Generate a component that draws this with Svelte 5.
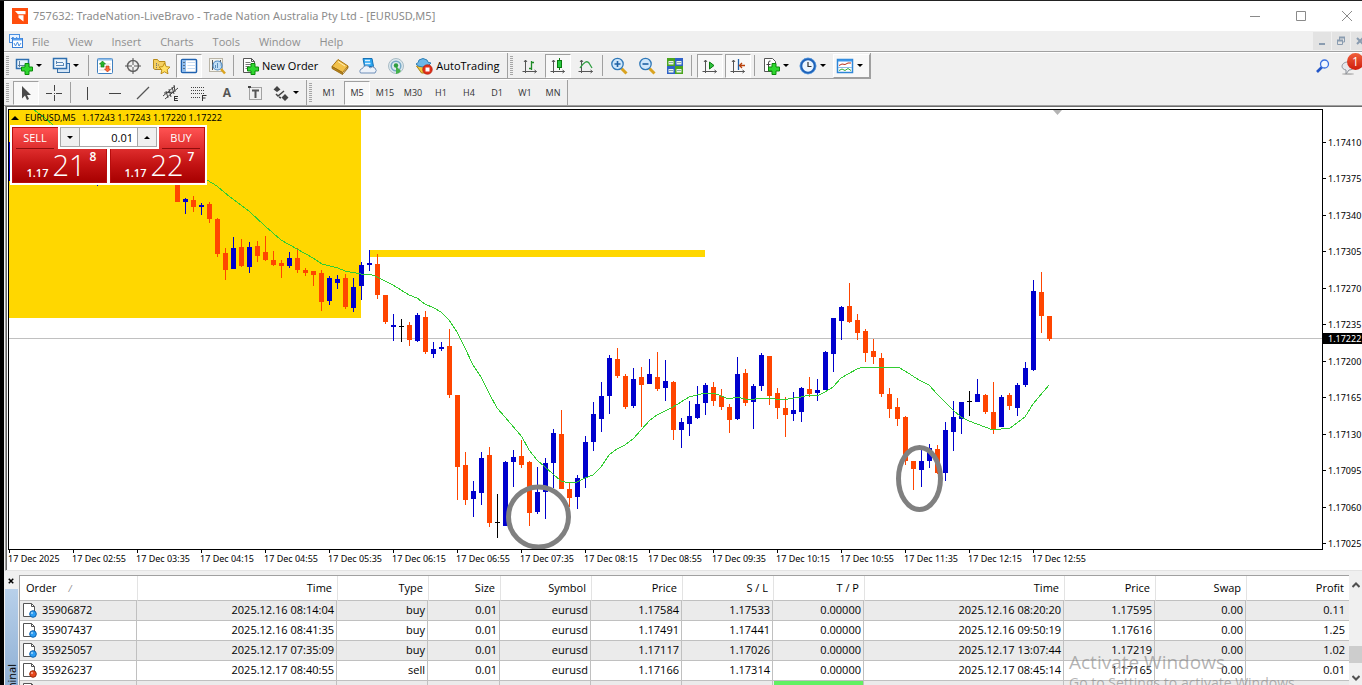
<script>
  const menus = ['File', 'View', 'Insert', 'Charts', 'Tools', 'Window', 'Help'];

  const plus = '<path d="M8.500 7.500h4v3.500h3.500v4h-3.500v3.500h-4v-3.500h-3.500v-4h3.500z" transform="translate(1.500 -1)" fill="#2fd62f" stroke="#0b8a0b"/>';
  const axes = '<path d="M4.500 3v13M1.500 14.500h14M3 5l1.500-2 1.500 2M13.500 13l2 1.500-2 1.500" fill="none" stroke="#555"/>';

  const icons = {
    newChart: '<rect x="1.500" y="2.500" width="12" height="9" fill="#e8f3fd" stroke="#2f6fb0" stroke-width="1.500"/><path d="M4.500 4v6M3 8.500h8" stroke="#5c7f9f" fill="none"/>' + plus,
    profiles: '<rect x="5.500" y="6.500" width="12" height="9" fill="#d5e6f7" stroke="#3a6fa5"/><rect x="1.500" y="1.500" width="13" height="10" fill="#eef6fd" stroke="#2f6fb0" stroke-width="1.500"/><path d="M4.500 4v3M4 5.500h7M11.500 6v3M4 8.500h7.500" stroke="#5c88b5" fill="none"/>',
    market: '<rect x="1.500" y="1.500" width="15" height="15" rx="1" fill="#fff" stroke="#3f7fbf"/><path d="M2 2.500h14" stroke="#8fbce8" stroke-width="2"/><path d="M3 7h12M3 10h12M3 13h12" stroke="#ddd"/><path d="M6.500 4l3 3h-1.500v3h-3v-3h-1.500z" fill="#27b52b" stroke="#0b7a10" stroke-width=".6"/><path d="M11.500 15l-3-3h1.500v-3h3v3h1.500z" fill="#ff6a3a" stroke="#b8300b" stroke-width=".6"/>',
    target: '<circle cx="9" cy="9" r="5.500" fill="none" stroke="#666" stroke-width="1.500"/><path d="M9 1v7M9 10v7M1 9h7M10 9h7" stroke="#555"/>',
    favourites: '<path d="M1.500 2.500h4l1.500 2h6v8h-10l-1.500-1z" fill="#f5d060" stroke="#b88b1a"/><path d="M4 8h4M4.500 6v8" stroke="#777" stroke-dasharray="1 1"/><path d="M12.500 6l1.700 3.600 3.800.5-2.800 2.700.8 4-3.500-2-3.500 2 .8-4L7 10.100l3.800-.5z" fill="#ffe066" stroke="#b8860b" stroke-width=".9"/>',
    navigator: '<rect x="1.500" y="2.500" width="15" height="13" rx="1" fill="#fff" stroke="#1f62b0" stroke-width="1.500"/><rect x="2" y="3" width="4" height="12" fill="#8fbcec"/><path d="M3.500 5.500h1M3.500 8.500h1M3.500 11.500h1" stroke="#222"/><path d="M7.500 5.500h8M7.500 8.500h8M7.500 11.500h8" stroke="#c6dcf3"/>',
    tester: '<rect x="1.500" y="1.500" width="13" height="13" fill="#f4f4ee" stroke="#b9b4a6"/><path d="M4.500 3v10M12.500 3v6" stroke="#555"/><circle cx="9.500" cy="8.500" r="4.500" fill="#b9dcf7" fill-opacity=".85" stroke="#4c88c2" stroke-width="1.200"/><path d="M9.500 6v5M7.500 8v3" stroke="#5b8db8"/><path d="M13 12l4 4.500" stroke="#d9a320" stroke-width="2.500"/>',
    order: '<path d="M2.500 1.500h8l3 3v11h-11z" fill="#fff" stroke="#555"/><path d="M10.500 1.500v3h3" fill="none" stroke="#555"/><path d="M4.500 5.500h5M4.500 7.500h7M4.500 9.500h4M4.500 11.500h3" stroke="#777"/>' + plus,
    editor: '<path d="M1 9.500l6-7 10 6.500-5.500 6.500z" fill="#f2c14a" stroke="#a87412"/><path d="M1 9.500v2l10.500 6v-2zM11.500 17.500l5.500-6.500v-2" fill="#b98518" stroke="#94660d" stroke-width=".8"/><path d="M7 4.500l7 4.500" stroke="#fff0b8"/>',
    vps: '<path d="M4 1.500h9l1.500 8h-9z" fill="#2aa5f0" stroke="#1570b5"/><path d="M6 3.500h5M6 6.500h5.500" stroke="#dff2ff" stroke-width="1.500"/><path d="M1.500 16a2.800 2.800 0 0 1 2-4.500 4 4 0 0 1 7.500-.5 3 3 0 0 1 5 5z" fill="#edf2f9" stroke="#6f8fb8"/>',
    signals: '<circle cx="9" cy="9" r="7.500" fill="#dde9ee" stroke="#a9bcc6"/><circle cx="9" cy="9" r="4.800" fill="none" stroke="#78a9c7" stroke-width="1.500"/><path d="M9 9v8a8 8 0 0 0 5-3z" fill="#45b24a"/><circle cx="9" cy="8.500" r="2.200" fill="#2f9e41"/>',
    auto: '<path d="M1.500 9h14l-4 7h-5z" fill="#f0c63a" stroke="#a8801a"/><path d="M1 7q3-1 3-4 4-3 8 0 0 3 4 3-2 4-8 4-5 0-7-3z" fill="#6bb7e8" stroke="#2f7fb5"/><circle cx="12.500" cy="12.500" r="4.800" fill="#e0301a" stroke="#a81505" stroke-width=".6"/><rect x="10.500" y="10.500" width="4" height="4" fill="#fff"/>',
    bars: axes + '<path d="M10.500 4v9M8 11.500h2.500M10.500 5.500h2.500" stroke="#1d8a25" stroke-width="1.300" fill="none"/>',
    candles: axes + '<path d="M10.500 1v12" stroke="#0b7a10"/><rect x="8.500" y="3.500" width="4" height="7" fill="#27c93f" stroke="#0b7a10"/>',
    line: axes + '<path d="M3 11q6-9 9-5l3 5" stroke="#2f9e41" stroke-width="1.300" fill="none"/>',
    zoomIn: '<path d="M11.500 11.500l5 5" stroke="#d9a320" stroke-width="3"/><circle cx="7.500" cy="7" r="5.700" fill="#cfe7fb" stroke="#2f78b8" stroke-width="1.300"/><path d="M4.500 7h6M7.500 4v6" stroke="#1f62a5" stroke-width="1.600"/>',
    zoomOut: '<path d="M11.500 11.500l5 5" stroke="#d9a320" stroke-width="3"/><circle cx="7.500" cy="7" r="5.700" fill="#cfe7fb" stroke="#2f78b8" stroke-width="1.300"/><path d="M4.500 7h6" stroke="#1f62a5" stroke-width="1.600"/>',
    tile: '<path d="M1 1h8v8H1zM9 9h8v8H9z" fill="#4aa51f"/><path d="M9 1h8v8H9zM1 9h8v8H1z" fill="#2f62c8"/><path d="M2.500 4h5v3.500h-5zM10.500 4h5v3.500h-5zM2.500 12h5v3.500h-5zM10.500 12h5v3.500h-5z" fill="#eef5e8"/><path d="M3 5.500h4M11 5.500h4M3 13.500h4M11 13.500h4" stroke="#8aa"/>',
    scroll: axes + '<path d="M8.500 5v7l4.500-3.500z" fill="#2fc43f" stroke="#0b7a10"/>',
    shift: axes + '<path d="M9.500 2v11" stroke="#2060a8" stroke-width="1.300"/><path d="M16 8.500h-5M13 6l-2.500 2.500L13 11" stroke="#b8400b" stroke-width="1.300" fill="none"/>',
    indicators: '<path d="M2.500 1.500h8l3 3v10h-11z" fill="#fff" stroke="#555"/><path d="M8.500 4q-2-.5-2 2v6M4.500 7.500h4" stroke="#444" fill="none"/>' + plus,
    clock: '<circle cx="9" cy="9" r="7" fill="#eaf5ff" stroke="#1e62b8" stroke-width="2.600"/><circle cx="9" cy="9" r="8" fill="none" stroke="#6fb0f0" stroke-width=".6"/><path d="M9 5v4.500h3.500" stroke="#333" fill="none" stroke-width="1.200"/>',
    templates: '<rect x="1.500" y="2.500" width="15" height="13" fill="#fff" stroke="#2f86d8" stroke-width="1.500"/><path d="M2 3.500h14" stroke="#3b97ea" stroke-width="2"/><path d="M2 10.500h14" stroke="#8fbce8"/><path d="M3 8.500l3-1.500 3 .5 3-1.500h3" stroke="#b8301a" fill="none"/><path d="M3 13.500l3-1.500 3 1.500 3-2 3 2" stroke="#2fae3a" fill="none"/>',
    cursor: '<path d="M5 2v12.500l3-3 2 4.500 2-1-2-4h4z" fill="#4a4a4a"/>',
    cross: '<path d="M9.500 1v6M9.500 11v6M1 9.500h6M11 9.500h6M9 9.500h1" stroke="#444"/>',
    vline: '<path d="M9.500 3v13" stroke="#444"/>',
    hline: '<path d="M3 9.500h12" stroke="#444"/>',
    trend: '<path d="M3 15L15 3" stroke="#555" stroke-width="1.200"/>',
    channel: '<path d="M1 12L13 2M3 15L16 4M4 7l2 7M7 5l2 8M10 3l2 7M12 1l1 7M2 9l10-1" stroke="#444"/><path d="M12.500 12v5M12.500 12.500h3.500M12.500 14.500h3M12.500 16.500h3.500" stroke="#333" fill="none"/>',
    fibo: '<path d="M1 3.500h14M1 6.500h14M1 9.500h14M1 13.500h9" stroke="#444" stroke-dasharray="1 1"/><path d="M12.500 11v6M12.500 11.500h4M12.500 14h3" stroke="#333" fill="none"/>',
    label: '<rect x="3.500" y="3.500" width="12" height="12" fill="none" stroke="#555" stroke-dasharray="1 1"/><path d="M2 3h3" stroke="#444" stroke-width="2"/><path d="M6 6.500h7M9.500 6v8" stroke="#555" stroke-width="2"/>',
    arrows: '<path d="M5 2l3.500 3.500L5 8 1.500 5.500zM13 10l3.500 3.500L13 17l-3.500-3.500z" fill="#444"/><path d="M4 10l2 2 6-5M9 14l-2-1" stroke="#444" fill="none" stroke-width="1.500"/>'
  };

  const standard = [
    { icon: 'newChart', name: 'New chart', drop: true }, { icon: 'profiles', name: 'Profiles', drop: true }, { sep: true },
    { icon: 'market', name: 'Market watch' }, { icon: 'target', name: 'Data window' }, { icon: 'favourites', name: 'Navigator' },
    { icon: 'navigator', name: 'Terminal', pressed: true }, { icon: 'tester', name: 'Strategy tester' }, { sep: true },
    { icon: 'order', text: 'New Order', name: 'New Order' }, { icon: 'editor', name: 'MetaEditor' }, { icon: 'vps', name: 'Virtual hosting' },
    { icon: 'signals', name: 'Signals' }, { icon: 'auto', text: 'AutoTrading', name: 'AutoTrading' }
  ];
  const charting = [
    { icon: 'bars', name: 'Bar chart' }, { icon: 'candles', name: 'Candlesticks', pressed: true }, { icon: 'line', name: 'Line chart' }, { sep: true },
    { icon: 'zoomIn', name: 'Zoom in' }, { icon: 'zoomOut', name: 'Zoom out' }, { icon: 'tile', name: 'Tile windows' }, { sep: true, wide: true },
    { icon: 'scroll', name: 'Auto scroll', pressed: true }, { icon: 'shift', name: 'Chart shift', pressed: true }, { sep: true, wide: true },
    { icon: 'indicators', name: 'Indicators', drop: true }, { icon: 'clock', name: 'Periods', drop: true }, { icon: 'templates', name: 'Templates', drop: true, raised: true }
  ];
  const drawing = [
    { icon: 'cursor', name: 'Cursor', pressed: true }, { icon: 'cross', name: 'Crosshair' }, { sep: true },
    { icon: 'vline', name: 'Vertical line' }, { icon: 'hline', name: 'Horizontal line' }, { icon: 'trend', name: 'Trendline' },
    { icon: 'channel', name: 'Equidistant channel' }, { icon: 'fibo', name: 'Fibonacci' }, { letter: 'A', name: 'Text' },
    { icon: 'label', name: 'Text label' }, { icon: 'arrows', name: 'Arrows', drop: true }
  ];
  const frames = ['M1', 'M5', 'M15', 'M30', 'H1', 'H4', 'D1', 'W1', 'MN'].map((f) => ({ frame: f, name: f, pressed: f === 'M5' }));

  // direction, high, body top, body bottom, low
  const candles = `r 180 180 202 202|b 198 199 202 214|r 196 200 207 212|b 203 205 207 215|r 202 204 219 223|r 218 219 254 257|r 248 253 270 280|b 237 248 269 269
r 239 247 266 267|b 242 247 267 273|r 241 246 256 262|r 236 252 260 261|r 251 260 265 266|r 260 263 266 278|b 252 258 266 268|r 248 258 270 273
r 268 270 273 276|r 271 271 275 286|r 270 273 302 311|b 276 278 301 305|b 275 279 283 289|r 274 278 307 309|b 278 287 308 312|b 262 265 286 300
b 250 263 265 271|r 254 264 295 299|r 295 295 322 324|b 314 325 327 341|k 319 326 327 342|r 322 325 340 346|b 313 315 341 342|r 311 317 352 354
b 342 349 354 358|b 342 347 349 351|r 329 346 395 398|r 395 395 467 500|r 452 465 500 505|b 481 491 499 517|b 452 458 493 505|r 447 455 523 527
k 494 522 523 538|b 461 462 526 526|b 450 457 462 487|r 440 456 465 468|r 461 462 513 526|b 467 492 512 514|b 458 463 492 519|b 429 433 463 488
r 410 434 489 489|r 483 489 498 507|b 475 478 497 509|b 436 442 478 488|b 402 414 442 451|b 382 396 419 432|b 355 358 396 414|r 348 359 376 378
r 374 376 407 409|b 368 379 406 408|r 367 377 385 427|b 359 374 384 384|r 352 377 389 391|b 360 381 388 401|r 381 382 430 440|b 418 422 430 448
b 401 416 424 436|b 386 404 418 419|b 383 385 403 415|r 382 387 401 406|r 389 396 407 410|r 404 407 420 433|b 357 374 419 420|r 369 373 403 406
b 384 386 402 429|b 353 355 386 391|r 356 356 396 405|r 388 393 408 419|r 397 408 415 437|b 392 410 414 421|b 387 388 412 422|r 377 389 394 397
b 379 390 393 401|b 351 352 390 390|b 318 318 354 372|b 306 307 321 340|r 283 306 322 323|r 314 320 333 340|r 329 331 353 362|r 339 351 357 364
r 353 358 394 397|r 388 394 409 418|r 398 407 419 426|r 416 417 461 465|r 461 461 469 490|b 449 461 470 487|b 444 448 461 468|r 445 449 473 474
b 422 430 473 481|b 401 417 432 451|b 402 402 419 434|k 391 401 402 416|b 379 394 402 402|r 394 395 412 414|r 382 412 429 434|b 395 397 427 427
r 393 395 406 410|b 383 385 408 416|b 362 368 385 387|b 280 291 370 371|r 272 292 316 333|r 316 316 339 341`
    .split(/[|\n]/)
    .map((row, i) => {
      const [kind, ...v] = row.trim().split(' ');
      const [high, top, bottom, low] = v.map(Number);
      return { kind, x: 177 + i * 8, high, top, bottom, low };
    });

  const average = '34,110 44,117 53,125 140,150 207,180 217,186 225,193 233,199 250,212 265,226 281,240 297,249 313,258 322,264 338,268 345,271 361,274 370,274 377,277 393,285 409,295 417,298 425,304 434,308 441,312 449,320 457,332 465,348 473,365 481,377 489,393 497,408 505,417 522,437 529,450 537,460 553,474 561,481 569,483 577,482 585,478 593,475 601,467 609,455 617,449 625,445 633,439 650,420 657,415 673,407 681,402 689,397 697,395 705,393 714,393 721,396 729,399 737,397 745,399 755,399 761,398 772,398 778,400 788,399 801,397 809,395 817,396 825,392 833,387 841,378 857,369 863,367 898,367 905,371 919,380 929,385 937,394 953,410 961,417 969,421 977,424 993,430 1010,428 1017,423 1025,417 1033,404 1049,385';

  const prices = ['1.17410', '1.17375', '1.17340', '1.17305', '1.17270', '1.17235', '1.17200', '1.17165', '1.17130', '1.17095', '1.17060', '1.17025'];
  const times = ['2025', '02:55', '03:35', '04:15', '04:55', '05:35', '06:15', '06:55', '07:35', '08:15', '08:55', '09:35', '10:15', '10:55', '11:35', '12:15', '12:55'];

  const columns = [['Order', 117], ['Time', 200], ['Type', 91], ['Size', 72], ['Symbol', 91], ['Price', 91], ['S / L', 91], ['T / P', 91], ['Time', 200], ['Price', 91], ['Swap', 91], ['Profit', 0]];
  const orders = [
    ['35906872', '2025.12.16 08:14:04', 'buy', '0.01', 'eurusd', '1.17584', '1.17533', '0.00000', '2025.12.16 08:20:20', '1.17595', '0.00', '0.11'],
    ['35907437', '2025.12.16 08:41:35', 'buy', '0.01', 'eurusd', '1.17491', '1.17441', '0.00000', '2025.12.16 09:50:19', '1.17616', '0.00', '1.25'],
    ['35925057', '2025.12.17 07:35:09', 'buy', '0.01', 'eurusd', '1.17117', '1.17026', '0.00000', '2025.12.17 13:07:44', '1.17219', '0.00', '1.02'],
    ['35926237', '2025.12.17 08:40:55', 'sell', '0.01', 'eurusd', '1.17166', '1.17314', '0.00000', '2025.12.17 08:45:14', '1.17165', '0.00', '0.01'],
    ['', '', '', '', '', '', '', '', '', '', '', '']
  ];

  let lots = $state('0.01');
</script>

{#snippet bar(items)}
  <div class="bar" role="toolbar">
    <span class="grip"></span>
    {#each items as b}
      {#if b.sep}
        <span class="sep" class:wide={b.wide}></span>
      {:else}
        <button class="tool" class:pressed={b.pressed} class:raised={b.raised} class:drop={b.drop} class:texted={b.text} aria-label={b.name}>
          {#if b.icon}<svg class="ico" viewBox="0 0 18 18">{@html icons[b.icon]}</svg>{/if}
          {#if b.letter}<b class="letter">{b.letter}</b>{/if}
          {#if b.frame}<span class="frame">{b.frame}</span>{/if}
          {#if b.text}<span class="caption">{b.text}</span>{/if}
          {#if b.drop}<i class="caret"></i>{/if}
        </button>
      {/if}
    {/each}
  </div>
{/snippet}

<div class="screen">
  <div class="window">
    <header class="title">
      <svg class="logo" viewBox="0 0 16 16"><rect width="16" height="16" fill="#ff4e0d" /><path d="M3 3h10.500v3.200H6zM6.500 7.300h5v6.200l-5-3.700z" fill="#fff" /></svg>
      <h1>757632: TradeNation-LiveBravo - Trade Nation Australia Pty Ltd - [EURUSD,M5]</h1>
      <div class="controls">
        <button aria-label="Minimize"><svg viewBox="0 0 10 10"><path d="M0 5.500h10" /></svg></button>
        <button aria-label="Maximize"><svg viewBox="0 0 10 10"><path d="M.5.500h9v9h-9z" /></svg></button>
        <button aria-label="Close"><svg viewBox="0 0 10 10"><path d="M0 0l10 10M10 0L0 10" /></svg></button>
      </div>
    </header>

    <nav class="menu">
      <svg class="doc" viewBox="0 0 16 16"><rect x="1.500" y="1.500" width="10" height="8" fill="#eaf3ff" stroke="#4a8fe0" /><path d="M3 6l2-2 2 3 2-3" fill="none" stroke="#4a8fe0" /><rect x="4.500" y="5.500" width="10" height="9" fill="#fff" stroke="#3a80d8" /><path d="M5 6.500h9" stroke="#5aa0ee" stroke-width="2" /><path d="M6 10l1.500 3L9.500 9l1.500 4 2-3" fill="none" stroke="#4a8fe0" /></svg>
      {#each menus as m}<button>{m}</button>{/each}
      <div class="mdi">
        <button aria-label="Minimize chart"><svg viewBox="0 0 10 10"><path d="M2 8h6" /></svg></button>
        <button aria-label="Restore chart"><svg viewBox="0 0 10 10"><path d="M1.500 4.500h5v4h-5zM3.500 4V1.500h5v4.500H7" class="thin" /><path d="M1 4.500h6M3 1.500h6" /></svg></button>
        <button aria-label="Close chart"><svg viewBox="0 0 10 10"><path d="M2 2l6 6M8 2L2 8" /></svg></button>
      </div>
    </nav>

    <div class="tools">
      <div class="rows">
        <div class="row first">{@render bar(standard)}{@render bar(charting)}</div>
        <div class="row second">{@render bar(drawing)}{@render bar(frames)}</div>
      </div>
      <div class="extras">
        <button aria-label="Search"><svg viewBox="0 0 14 14" width="14" height="14"><path d="M6 8l-5 5" stroke="#2356c8" stroke-width="2.600" /><circle cx="8.500" cy="5" r="4" fill="#f2f7ff" stroke="#3a6fe0" stroke-width="1.300" /></svg></button>
        <button class="chat" aria-label="Messages"><svg viewBox="0 0 16 16" width="16" height="16"><ellipse cx="7" cy="14" rx="6" ry="1" fill="#bbb" /><path d="M7 2c8 0 8 8 1 8l-3 4V10C-1 9 0 2 7 2z" fill="#e6e8ec" stroke="#8d9299" /></svg><span class="badge">1</span></button>
      </div>
    </div>

    <main class="chart">
      <div class="plot">
        <svg class="canvas" role="img" aria-label="EURUSD five minute chart">
          <g transform="translate(-9 -110)">
            <rect x="9" y="110" width="352" height="208" fill="#ffd700" />
            <rect x="369" y="250" width="336" height="7" fill="#ffd700" />
            <rect x="9" y="338" width="4000" height="1" fill="#c0c0c0" />
            <path d="M1053 110h9l-4.500 5z" fill="#b4b4b4" />
            <g shape-rendering="crispEdges">
              {#each candles as c}
                <g class={c.kind}>
                  <rect x={c.x} y={c.high} width="1" height={c.low - c.high} />
                  <rect x={c.x - 2} y={c.top} width="5" height={c.bottom - c.top} />
                </g>
              {/each}
              <rect x="9" y="142" width="1" height="39" class="b" />
              <rect x="89" y="183" width="1" height="2" class="r" />
              <rect x="97" y="183" width="1" height="3" class="b" />
              <polyline points={average} fill="none" stroke="#32cd32" />
            </g>
            <g fill="none" stroke="#808080" stroke-width="5">
              <ellipse cx="538.500" cy="517" rx="30" ry="30" />
              <ellipse cx="919.500" cy="478.500" rx="21" ry="31" />
            </g>
          </g>
        </svg>
        <div class="quote"><i class="up"></i><span>EURUSD,M5</span><span>1.17243 1.17243 1.17220 1.17222</span></div>
        <div class="deal">
          <button class="side">
            <span class="word">SELL</span>
            <span class="price"><small>1.17</small><em>21</em><sup>8</sup></span>
          </button>
          <button class="side buy">
            <span class="word">BUY</span>
            <span class="price"><small>1.17</small><em>22</em><sup>7</sup></span>
          </button>
          <div class="volume">
            <button aria-label="Decrease volume"><i class="down"></i></button>
            <input aria-label="Volume" bind:value={lots} />
            <button aria-label="Increase volume"><i class="up"></i></button>
          </div>
        </div>
      </div>
      <div class="prices">
        {#each prices as p}<span>{p}</span>{/each}
        <b class="now">1.17222</b>
      </div>
      <div class="times">
        {#each times as t}<span>17 Dec {t}</span>{/each}
      </div>
    </main>

    <section class="terminal">
      <div class="dock">
        <button aria-label="Close terminal"><svg viewBox="0 0 8 8"><path d="M1 1l6 6M7 1L1 7" /></svg></button>
        <div class="tab"><span>Terminal</span></div>
      </div>
      <div class="grid">
        <table>
          <colgroup>
            {#each columns as [, w]}<col style={w ? `width:${w}px` : null} />{/each}
          </colgroup>
          <thead>
            <tr>{#each columns as [name], i}<th>{name}{#if i === 0}<i class="sort">/</i>{/if}</th>{/each}</tr>
          </thead>
          <tbody>
            {#each orders as o, r}
              <tr>
                {#each o as v, i}
                  <td class:hit={r === 4 && i === 7}>
                    {#if i === 0}
                      <span class="ticket">
                        <svg viewBox="0 0 16 16"><path d="M1.500 1.500h8l3 3v10h-11z" fill="#fff" stroke="#555" /><path d="M9.500 1.500v3h3" fill="none" stroke="#555" /><circle cx="11" cy="12" r="3.300" fill={r === 3 ? '#e8481c' : '#2a9df4'} stroke={r === 3 ? '#9c2a08' : '#0f62ad'} /><circle cx="10" cy="11" r="1" fill="#fff" fill-opacity=".6" /></svg>
                        {v}
                      </span>
                    {:else}{v}{/if}
                  </td>
                {/each}
              </tr>
            {/each}
          </tbody>
        </table>
      </div>
      <div class="scroll">
        <svg viewBox="0 0 8 6"><path d="M.5 5L4 1.500 7.500 5" /></svg>
        <span class="thumb"></span>
        <svg viewBox="0 0 8 6"><path d="M.5 1L4 4.500 7.500 1" /></svg>
      </div>
    </section>
  </div>

  <aside class="notice">
    <strong>Activate Windows</strong>
    <span>Go to Settings to activate Windows.</span>
  </aside>
</div>

<style>
  :global(body) { overflow: hidden; background: #000; }
  * { box-sizing: border-box; }
  button { border: 0; padding: 0; margin: 0; background: none; font: inherit; color: inherit; }

  .screen {
    height: 100vh;
    padding: 1px 0 0 4px;
    overflow: hidden;
    position: relative;
    background: linear-gradient(#222 1px, #000 1px);
    font-family: "Open Sans", "Noto Sans", sans-serif;
    font-size: 11px;
    color: #000;
  }
  .window { height: 100%; display: flex; flex-direction: column; background: #f0f0f0; }

  .title { height: 30px; display: flex; align-items: center; padding-left: 8px; background: #fff; color: #8c8c8c; overflow: hidden; }
  .logo { width: 16px; height: 16px; }
  h1 { margin: 0 0 2px 5px; font-family: "Noto Sans", sans-serif; font-size: 11px; font-weight: 400; white-space: nowrap; }
  .controls { margin: 0 -8px 1px auto; display: flex; }
  .controls button { width: 46px; height: 28px; display: grid; place-items: center; }
  .controls svg { width: 10px; height: 10px; fill: none; stroke: #8a8a8a; overflow: visible; }

  .menu { height: 20px; display: flex; align-items: center; gap: 19px; padding-left: 4px; color: #8f8f8f; }
  .doc { width: 16px; height: 16px; margin-right: -11px; }
  .mdi { margin-left: auto; margin-right: -7px; display: flex; gap: 1px; }
  .mdi button { width: 18px; height: 18px; display: grid; place-items: center; background: #e3e3e3; }
  .mdi svg { width: 10px; height: 10px; fill: none; stroke: #8a9cb0; stroke-width: 2; }
  .mdi .thin { stroke-width: 1; }

  .tools { display: flex; justify-content: space-between; border-top: 1px solid #a0a0a0; border-bottom: 1px solid #a0a0a0; box-shadow: inset 0 1px #fff; padding-top: 1px; }
  .row { display: flex; width: max-content; }
  .first { border-bottom: 1px solid #a0a0a0; }
  .second { border-top: 1px solid #fff; }
  .bar { display: flex; align-items: center; height: 25px; border-right: 1px solid #a0a0a0; }
  .grip { width: 8px; height: 19px; background: repeating-linear-gradient(#a6a6a6 0 1px, #f0f0f0 1px 2px) 2px 0 / 3px 100% no-repeat; }
  .sep { width: 5px; height: 21px; background: linear-gradient(#a0a0a0, #a0a0a0) 2px 0 / 1px 100% no-repeat; }
  .sep.wide { width: 7px; }
  .tool { width: 28px; height: 24px; display: flex; align-items: center; justify-content: center; border: 1px solid transparent; background-clip: padding-box; }
  .tool.pressed { width: 26px; margin: 0 1px; border-color: #a0a0a0 #fff #fff #a0a0a0; background: #f8f8f8; }
  .tool.drop { width: 37px; gap: 3px; padding-left: 2px; justify-content: flex-start; }
  .tool.raised { border-color: #fff #a0a0a0 #a0a0a0 #fff; background: #f8f8f8; }
  .tool.texted { width: auto; padding: 0 7px 0 4px; gap: 3px; }
  .ico { width: 18px; height: 18px; flex: none; }
  .caption { font-size: 11px; white-space: nowrap; }
  .frame { font-size: 9px; color: #333; }
  .letter { font-size: 12px; color: #555; }
  .caret { border: 3px solid transparent; border-top-color: #000; border-bottom: 0; }
  .extras { display: flex; gap: 11px; height: 25px; align-items: center; }
  .extras button { display: flex; }
  .chat { position: relative; width: 21px; padding-top: 4px; }
  .badge { position: absolute; left: 6px; top: -3px; width: 17px; height: 17px; border-radius: 50%; background: linear-gradient(#f0603c, #cf1c0c); color: #fff; font-size: 12px; line-height: 17px; text-align: center; }

  .chart {
    display: grid;
    grid-template-columns: minmax(0, 1fr) 39px;
    grid-template-rows: 441px 20px;
    margin-left: 1px;
    padding: 2px 0 0 1px;
    border-left: 1px solid #a0a0a0;
    border-top: 1px solid #696969;
    border-bottom: 1px solid #e3e3e3;
    box-shadow: inset 1px 0 #696969;
    background: #fff;
    font-family: "Noto Sans", sans-serif;
    font-size: 9px;
    line-height: 11px;
  }
  .plot { position: relative; border: 1px solid #000; margin-left: 1px; }
  .canvas { display: block; width: 100%; height: 439px; }
  .r { fill: #ff4500; }
  .b { fill: #0000cd; }
  .k { fill: #000; }
  .quote { position: absolute; left: 2px; top: 2px; display: flex; align-items: center; gap: 6px; white-space: nowrap; }
  .up { border: 4px solid transparent; border-bottom-color: #000; border-top: 0; }
  .down { border: 3px solid transparent; border-top-color: #000; border-bottom: 0; }

  .deal { position: absolute; left: 1px; top: 15px; display: flex; gap: 3px; padding: 2px; background: #fff; color: #fff; font-family: "Open Sans", sans-serif; }
  .side { width: 95px; height: 56px; border: 1px solid #b80d0d; background: linear-gradient(#ff5252, #d92828 24px, #c41414 36px, #a80000); display: flex; flex-direction: column; }
  .word { width: 38px; height: 21px; margin-left: 3px; border-bottom: 1px solid #8e0d0d; font-size: 11px; line-height: 20px; text-align: center; }
  .buy .word { align-self: flex-end; margin-right: 4px; }
  .price { display: flex; align-items: flex-end; justify-content: center; gap: 4px; width: 100%; height: 33px; padding-left: 4px; }
  small { font-size: 11px; line-height: 18px; font-weight: 600; }
  em { font-size: 29px; line-height: 34px; font-style: normal; font-weight: 300; }
  sup { align-self: flex-start; font-size: 12px; line-height: 16px; font-weight: 600; }
  .volume { position: absolute; left: 48px; top: 2px; display: flex; width: 101px; height: 22px; padding: 0 2px 2px; background: #fff; }
  .volume button { width: 20px; display: grid; place-items: center; border: 1px solid #a8a8a8; background: #f0f0f0; }
  .volume .up { border-width: 0 3px 3px; }
  .volume input { flex: 1; min-width: 0; margin: 0 -1px; border: 1px solid #a8a8a8; padding: 0 4px; font: 11px "Open Sans", sans-serif; text-align: right; }

  .prices { position: relative; display: flex; flex-direction: column; justify-content: space-between; padding: 28px 0 1px; }
  .prices span { padding-left: 5px; background: linear-gradient(#000, #000) 0 5px / 3px 1px no-repeat; }
  .now { position: absolute; left: 0; right: 0; top: 224px; padding-left: 5px; background: #000; color: #fff; font-weight: 400; }
  .times { grid-column: 1 / -1; display: flex; padding-left: 1px; }
  .times span { width: 64px; padding-top: 3px; white-space: nowrap; background: linear-gradient(#000, #000) 1px 0 / 1px 3px no-repeat; }

  .terminal { flex: 1; min-height: 0; display: flex; margin-top: 4px; overflow: hidden; }
  .dock { width: 15px; display: flex; flex-direction: column; padding-left: 1px; }
  .dock button { height: 14px; display: grid; place-items: center; padding: 0 3px 2px 0; }
  .dock svg { width: 6px; height: 6px; fill: none; stroke: #000; stroke-width: 2; }
  .tab { flex: 1; min-height: 0; overflow: hidden; background: linear-gradient(#b8d0ea, #8fb0d4); width: 13px; }
  .tab span { display: block; writing-mode: vertical-rl; transform: rotate(180deg); line-height: 13px; margin-top: 75px; }
  .grid { flex: 1; min-width: 0; border-top: 1px solid #a0a0a0; border-left: 1px solid #a0a0a0; background: #fff; }
  table { width: 100%; table-layout: fixed; border-collapse: separate; border-spacing: 0; }
  th { height: 25px; padding: 0 5px 2px; border-bottom: 1px solid #c0c0c0; font-weight: 400; text-align: right; }
  th + th { border-left: 1px solid #e3e3e3; }
  th:first-child { text-align: left; padding-left: 6px; }
  .sort { margin-left: 12px; color: #888; font-size: 9px; }
  td { height: 20px; padding: 0 2px 2px; border-right: 1px solid #c0c0c0; border-bottom: 1px solid #c0c0c0; text-align: right; line-height: 15px; white-space: nowrap; }
  td:last-child { border-right: 0; padding-right: 4px; }
  tbody tr:nth-child(odd) td { background: #ebebeb; }
  tbody tr td.hit { background: #62f062; border-left: 1px solid #ebebeb; }
  .ticket { display: flex; align-items: center; gap: 4px; }
  .ticket svg { width: 16px; height: 16px; flex: none; }
  .scroll { width: 13px; display: flex; flex-direction: column; align-items: center; justify-content: space-between; padding: 7px 0 4px; }
  .scroll svg { width: 8px; height: 6px; fill: none; stroke: #505050; stroke-width: 2; }
  .thumb { align-self: stretch; height: 17px; margin: auto 0 12px; background: #cdcdcd; }

  .notice { position: absolute; left: calc(100% - 293px); top: calc(100% - 35px); display: flex; flex-direction: column; color: rgba(130, 130, 130, 0.6); white-space: nowrap; pointer-events: none; }
  strong { font-size: 19px; line-height: 24px; font-weight: 400; }
  .notice span { font-size: 14px; line-height: 18px; }
</style>
